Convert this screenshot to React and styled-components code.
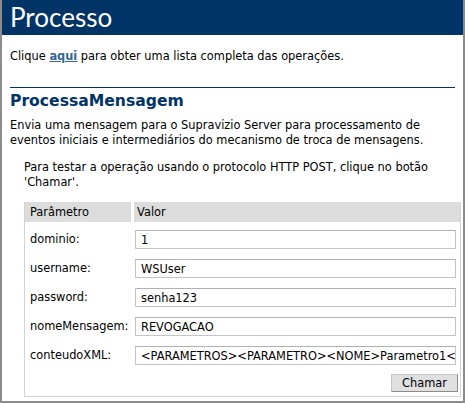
import styled, { createGlobalStyle } from "styled-components";

const Global = createGlobalStyle`
    html, body {
        margin: 0;
        padding: 0;
        background: #fff;
        overflow: hidden;
    }
`

const Frame = styled.div`
    width: 465px;
    height: 403px;
    box-sizing: border-box;
    border: 2px solid #8c8c8c;
    border-top: none;
    background: #fff;
    font-family: "DejaVu Sans", Verdana, sans-serif;
    font-size: 11.4px;
    color: #000;
    overflow: hidden;
`

const Heading = styled.div`
    height: 35px;
    background: #003366;
    color: #fff;
    font-family: Lato, "DejaVu Sans", sans-serif;
    font-size: 26px;
    line-height: 35px;
    padding-left: 8px;
`

const Content = styled.div`
    padding: 0 8px;
`

const Intro = styled.p`
    margin: 14px 0 0;
    line-height: 15px;
    a {
        color: #336699;
        font-weight: bold;
        text-decoration: underline;
    }
`

const Title = styled.h2`
    margin: 23px 0 0;
    border-top: 1px solid #003366;
    padding-top: 3px;
    font-size: 15.6px;
    line-height: 20px;
    font-weight: bold;
    color: #003366;
`

const Desc = styled.p`
    margin: 7px 0 0;
    line-height: 15px;
`

const Section = styled.div`
    padding-left: 14px;
`

const Note = styled.p`
    margin: 12px 0 0;
    line-height: 15px;
    padding-right: 10px;
`

const Params = styled.div`
    margin-top: 12px;
    width: 437px;
    box-sizing: border-box;
    border: 1px solid #d4d4d4;
    border-top: none;
    display: grid;
    grid-template-columns: 106px 1fr;
    column-gap: 3px;
`

const HeadCell = styled.div`
    background: #dcdcdc;
    height: 20px;
    line-height: 20px;
    padding-left: ${p => p.$pad}px;
    margin-bottom: 3px;
`

const Label = styled.div`
    height: 29px;
    line-height: 29px;
    padding-left: 5px;
`

const Value = styled.div`
    height: 29px;
    display: flex;
    align-items: center;
    padding-left: 1px;
`

const Field = styled.input`
    width: 321px;
    height: 19px;
    box-sizing: border-box;
    border: 1px solid #c4c4c4;
    border-top-color: #b0b0b0;
    padding: 0 0 0 5px;
    font-family: "DejaVu Sans", Verdana, sans-serif;
    font-size: 11.4px;
    color: #000;
    outline: none;
`

const Actions = styled.div`
    grid-column: 2;
    height: 26px;
    display: flex;
    justify-content: flex-end;
    align-items: center;
    padding-right: 2px;
`

const Button = styled.button`
    width: 67px;
    height: 18px;
    box-sizing: border-box;
    padding: 0;
    background: #e0e0e0;
    border: 1px solid #8a8a8a;
    border-top-color: #c8c8c8;
    border-left-color: #c8c8c8;
    font-family: "DejaVu Sans", Verdana, sans-serif;
    font-size: 11.4px;
    color: #000;
    line-height: 16px;
`

const fields = [
    ["dominio:", "1"],
    ["username:", "WSUser"],
    ["password:", "senha123"],
    ["nomeMensagem:", "REVOGACAO"],
    ["conteudoXML:", "<PARAMETROS><PARAMETRO><NOME>Parametro1</NOME><VALOR>1</VALOR></PARAMETRO></PARAMETROS>"],
]

export default function App(){
    return <>
        <Global />
        <Frame>
            <Heading>Processo</Heading>
            <Content>
                <Intro>Clique <a href="#">aqui</a> para obter uma lista completa das operações.</Intro>
                <Title>ProcessaMensagem</Title>
                <Desc>Envia uma mensagem para o Supravizio Server para processamento de eventos iniciais e intermediários do mecanismo de troca de mensagens.</Desc>
                <Section>
                    <Note>Para testar a operação usando o protocolo HTTP POST, clique no botão 'Chamar'.</Note>
                    <Params>
                        <HeadCell $pad={5}>Parâmetro</HeadCell>
                        <HeadCell $pad={3}>Valor</HeadCell>
                        {fields.map(([name, val]) => <>
                            <Label key={name + "l"}>{name}</Label>
                            <Value key={name + "v"}>
                                <Field type="text" defaultValue={val} />
                            </Value>
                        </>)}
                        <Actions>
                            <Button type="button">Chamar</Button>
                        </Actions>
                    </Params>
                </Section>
            </Content>
        </Frame>
    </>
}
